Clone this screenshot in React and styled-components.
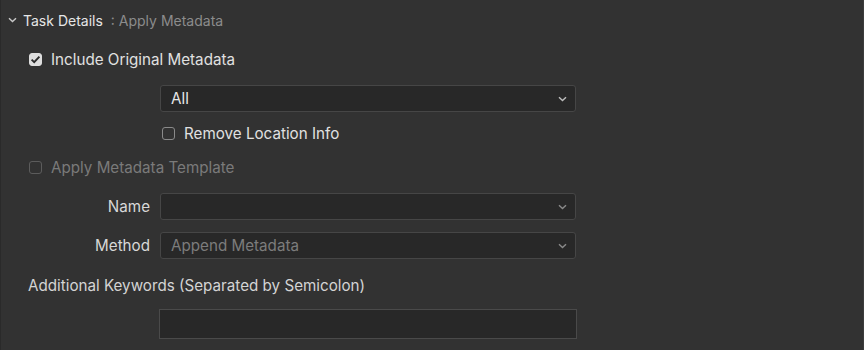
import React from "react";
import styled, { createGlobalStyle } from "styled-components";

const Global = createGlobalStyle`
  html, body { margin: 0; padding: 0; background: #323232; }
  body { font-family: Inter, "Noto Sans", sans-serif; -webkit-font-smoothing: antialiased; }
`;

const Panel = styled.div`
  width: 864px;
  height: 350px;
  box-sizing: border-box;
  background: #323232;
  border-left: 1px solid #2a2a2a;
  border-right: 1px solid #3c3c3c;
  padding: 9px 0 0 0;
  color: #dcdcdc;
  font-size: 15.2px;
  overflow: hidden;
`;

const Header = styled.div`
  display: flex;
  align-items: center;
  height: 22px;
  padding-left: 7px;
  gap: 6px;
`;

const Title = styled.span`
  color: #e6e6e6;
  font-size: 14px;
`;

const Subtitle = styled.span`
  color: #8c8c8c;
  font-size: 14px;
  margin-left: 2px;
`;

const CheckRow = styled.label`
  display: flex;
  align-items: center;
  gap: 9px;
  height: 20px;
  margin-left: ${(p) => p.$indent}px;
  margin-top: ${(p) => p.$top}px;
  color: ${(p) => (p.$disabled ? "#7a7a7a" : "#e0e0e0")};
  font-size: 15.2px;
`;

const Box = styled.span`
  width: 13px;
  height: 13px;
  box-sizing: border-box;
  border-radius: 3px;
  display: flex;
  align-items: center;
  justify-content: center;
  background: ${(p) => (p.$checked ? "#dedede" : "transparent")};
  border: 1px solid ${(p) => (p.$checked ? "#dedede" : p.$disabled ? "#5c5c5c" : "#8a8a8a")};
`;

const FieldRow = styled.div`
  display: grid;
  grid-template-columns: 149px 416px;
  column-gap: 10px;
  align-items: center;
  margin-top: ${(p) => p.$top}px;
`;

const FieldLabel = styled.span`
  text-align: right;
  color: #d8d8d8;
  font-size: 15.2px;
`;

const Select = styled.div`
  grid-column: 2;
  height: 27px;
  box-sizing: border-box;
  background: #282828;
  border: 1px solid #464646;
  border-radius: 3px;
  display: flex;
  align-items: center;
  justify-content: space-between;
  padding: 0 8px 0 10px;
  color: ${(p) => (p.$muted ? "#7c7c7c" : "#e6e6e6")};
  font-size: 15.2px;
`;

const SubLabel = styled.div`
  margin: ${(p) => p.$top}px 0 0 27px;
  color: #d4d4d4;
  font-size: 15.2px;
  height: 20px;
  display: flex;
  align-items: center;
`;

const TextInput = styled.div`
  margin: 14px 0 0 158px;
  width: 418px;
  height: 30px;
  box-sizing: border-box;
  background: #282828;
  border: 1px solid #4a4a4a;
`;

const Chevron = ({ color = "#bdbdbd" }) => (
  <svg width="9" height="6" viewBox="0 0 9 6">
    <path d="M1 1.2 L4.5 4.6 L8 1.2" fill="none" stroke={color} strokeWidth="1.4" />
  </svg>
);

const Check = () => (
  <svg width="11" height="9" viewBox="0 0 11 9">
    <path d="M1.6 4.6 L4.2 7.1 L9.4 1.6" fill="none" stroke="#2a2a2a" strokeWidth="1.9" />
  </svg>
);

export default function App() {
  return (
    <>
      <Global />
      <Panel>
        <Header>
          <Chevron color="#c8c8c8" />
          <Title>Task Details</Title>
          <Subtitle>: Apply Metadata</Subtitle>
        </Header>
        <CheckRow $indent={28} $top={18}>
          <Box $checked>
            <Check />
          </Box>
          Include Original Metadata
        </CheckRow>
        <FieldRow $top={16}>
          <Select>
            All
            <Chevron />
          </Select>
        </FieldRow>
        <CheckRow $indent={161} $top={11}>
          <Box />
          Remove Location Info
        </CheckRow>
        <CheckRow $indent={28} $top={14} $disabled>
          <Box $disabled />
          Apply Metadata Template
        </CheckRow>
        <FieldRow $top={16}>
          <FieldLabel>Name</FieldLabel>
          <Select>
            <span />
            <Chevron color="#8a8a8a" />
          </Select>
        </FieldRow>
        <FieldRow $top={12}>
          <FieldLabel>Method</FieldLabel>
          <Select $muted>
            Append Metadata
            <Chevron color="#8a8a8a" />
          </Select>
        </FieldRow>
        <SubLabel $top={16}>Additional Keywords (Separated by Semicolon)</SubLabel>
        <TextInput />
      </Panel>
    </>
  );
}
